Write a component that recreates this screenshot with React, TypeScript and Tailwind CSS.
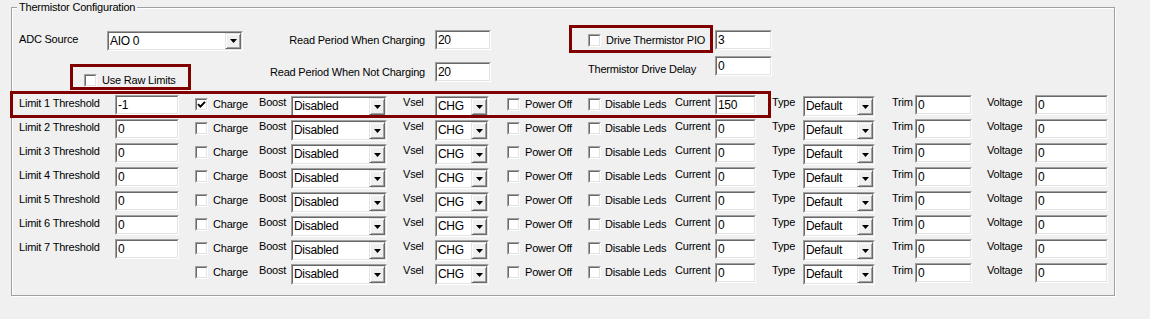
import React from "react";

function TextBox({ value, w }: { value: string; w: string }) {
  return (
    <div className={`${w} h-[20px] shrink-0 border border-t-[#a0a0a0] border-l-[#a0a0a0] border-b-white border-r-white`}>
      <div className="h-full border border-t-[#696969] border-l-[#696969] border-b-[#e3e3e3] border-r-[#e3e3e3] bg-white pl-[1px] text-[12px] leading-[16px] tracking-[-0.3px] whitespace-nowrap overflow-hidden">
        {value}
      </div>
    </div>
  );
}

function Combo({ value, w, h }: { value: string; w: string; h: string }) {
  return (
    <div className={`${w} ${h} shrink-0 border border-t-[#a0a0a0] border-l-[#a0a0a0] border-b-white border-r-white`}>
      <div className="h-full flex border border-t-[#696969] border-l-[#696969] border-b-[#e3e3e3] border-r-[#e3e3e3] bg-white">
        <div className="flex-1 pl-[1px] text-[12px] leading-[17px] tracking-[-0.3px] whitespace-nowrap overflow-hidden">
          {value}
        </div>
        <div className="w-[16px] h-full bg-[#f0f0f0] border border-t-[#e3e3e3] border-l-[#e3e3e3] border-b-[#696969] border-r-[#696969] shadow-[inset_1px_1px_0_#fff,inset_-1px_-1px_0_#a0a0a0] flex items-center justify-center">
          <svg width="7" height="4" viewBox="0 0 7 4">
            <polygon points="0,0 7,0 3.5,4" fill="#000" />
          </svg>
        </div>
      </div>
    </div>
  );
}

function Check({ checked = false }: { checked?: boolean }) {
  return (
    <div className="w-[13px] h-[13px] shrink-0 border border-t-[#a0a0a0] border-l-[#a0a0a0] border-b-white border-r-white">
      <div className="w-full h-full border border-t-[#696969] border-l-[#696969] border-b-[#e3e3e3] border-r-[#e3e3e3] bg-white flex items-center justify-center">
        {checked && (
          <svg width="9" height="9" viewBox="0 0 9 9">
            <path d="M1 4.2 L3.4 6.6 L8 1.8" stroke="#000" strokeWidth="1.9" fill="none" />
          </svg>
        )}
      </div>
    </div>
  );
}

function LimitRow({ label, threshold, checked, current }: { label?: string; threshold?: string; checked?: boolean; current: string }) {
  return (
    <div className="grid grid-cols-[96px_80px_18px_46px_32px_112px_32px_72px_18px_63px_17px_70px_40px_57px_31px_89px_23px_72px_48px_73px] h-[24px] items-start">
      <div className="mt-[2px] whitespace-nowrap">{label ?? ""}</div>
      <div>{threshold !== undefined ? <TextBox value={threshold} w="w-[64px]" /> : null}</div>
      <div className="mt-[3px]"><Check checked={checked} /></div>
      <div className="mt-[3px] whitespace-nowrap">Charge</div>
      <div className="mt-[1px]">Boost</div>
      <div className="mt-[1px]"><Combo value="Disabled" w="w-[96px]" h="h-[21px]" /></div>
      <div className="mt-[1px]">Vsel</div>
      <div className="mt-[1px]"><Combo value="CHG" w="w-[54px]" h="h-[21px]" /></div>
      <div className="mt-[3px]"><Check /></div>
      <div className="mt-[3px] whitespace-nowrap">Power Off</div>
      <div className="mt-[3px]"><Check /></div>
      <div className="mt-[3px] whitespace-nowrap">Disable Leds</div>
      <div className="mt-[1px]">Current</div>
      <div><TextBox value={current} w="w-[41px]" /></div>
      <div className="mt-[1px]">Type</div>
      <div className="mt-[1px]"><Combo value="Default" w="w-[72px]" h="h-[21px]" /></div>
      <div className="mt-[1px]">Trim</div>
      <div><TextBox value="0" w="w-[57px]" /></div>
      <div className="mt-[1px]">Voltage</div>
      <div><TextBox value="0" w="w-[73px]" /></div>
    </div>
  );
}

export default function App() {
  const rows = [1, 2, 3, 4, 5, 6, 7];
  return (
    <div className="relative w-[1150px] h-[319px] bg-[#f0f0f0] overflow-hidden text-black font-['Liberation_Sans',Arial,sans-serif] text-[11px] leading-[13px] tracking-[-0.2px]">
      <div className="pt-[7px] pl-[11px]">
        <div className="relative w-[1104px] h-[289px] border border-[#a0a0a0] shadow-[inset_1px_1px_0_#fff,1px_1px_0_#fff]">
          <div className="absolute left-[5px] top-[-7px] bg-[#f0f0f0] px-[2px] whitespace-nowrap">Thermistor Configuration</div>

          <div className="flex h-[87px]">
            <div className="ml-[7px] w-[224px] pt-[23px]">
              <div className="flex items-start">
                <div className="w-[88px] pt-[2px]">ADC Source</div>
                <Combo value="AIO 0" w="w-[136px]" h="h-[20px]" />
              </div>
              <div className="mt-[23px] ml-[65px] flex items-center gap-[5px]">
                <Check />
                <span className="whitespace-nowrap">Use Raw Limits</span>
              </div>
            </div>

            <div className="ml-[7px] pt-[22px]">
              <div className="grid grid-cols-[175px_56px] gap-x-[10px] gap-y-[12px] items-center">
                <div className="text-right whitespace-nowrap">Read Period When Charging</div>
                <TextBox value="20" w="w-[56px]" />
                <div className="text-right whitespace-nowrap">Read Period When Not Charging</div>
                <TextBox value="20" w="w-[56px]" />
              </div>
            </div>

            <div className="ml-[97px] pt-[22px]">
              <div className="flex items-center">
                <div className="w-[127px] flex items-center gap-[5px]">
                  <Check />
                  <span className="whitespace-nowrap">Drive Thermistor PIO</span>
                </div>
                <TextBox value="3" w="w-[57px]" />
              </div>
              <div className="mt-[6px] flex items-start">
                <div className="w-[127px] pt-[7px] whitespace-nowrap">Thermistor Drive Delay</div>
                <TextBox value="0" w="w-[57px]" />
              </div>
            </div>
          </div>

          <div className="pl-[7px]">
            {rows.map((n) => (
              <LimitRow
                key={n}
                label={`Limit ${n} Threshold`}
                threshold={n === 1 ? "-1" : "0"}
                checked={n === 1}
                current={n === 1 ? "150" : "0"}
              />
            ))}
            <LimitRow current="0" />
          </div>
        </div>
      </div>

      <div className="absolute left-[70px] top-[64px] w-[121px] h-[26px] border-[3px] border-[#800000] pointer-events-none" />
      <div className="absolute left-[10px] top-[91px] w-[761px] h-[27px] border-[3px] border-[#800000] pointer-events-none" />
      <div className="absolute left-[569px] top-[25px] w-[144px] h-[28px] border-[3px] border-[#800000] pointer-events-none" />
    </div>
  );
}
